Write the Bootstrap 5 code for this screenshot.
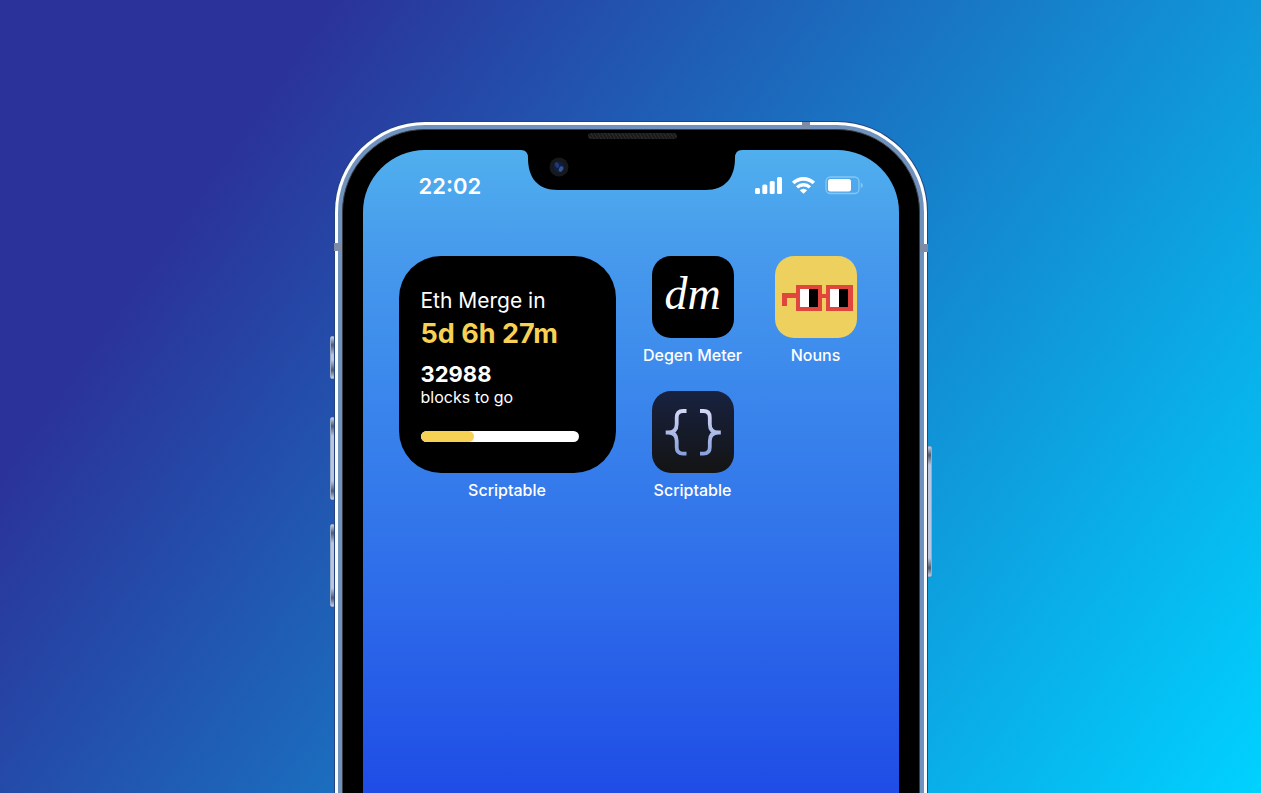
<!DOCTYPE html>
<html lang="en">
<head>
<meta charset="utf-8">
<meta name="viewport" content="width=device-width, initial-scale=1">
<title>Eth Merge widget</title>
<link rel="stylesheet" href="https://cdn.jsdelivr.net/npm/bootstrap@5.3.0/dist/css/bootstrap.min.css">
<style>
  body {
    font-family: Inter, "Liberation Sans", sans-serif;
    background: linear-gradient(125deg, #2b3299 18%, #00d2ff 100%) no-repeat;
  }
  .stage { height: 100vh; padding-top: 121px; }
  .phone { width: 594px; height: 1200px; }
  .rim {
    height: 100%;
    border-radius: 91px;
    padding: 1px;
    background: #26437f;
  }
  .rim-light { height: 100%; border-radius: 90px; padding: 3px; background: linear-gradient(#fff, #f4f6fb); }
  .rim-blue { height: 100%; border-radius: 87px; padding: 4px; background: #6f91be; }
  .bezel { height: 100%; border-radius: 83px; border: 1px solid #3a3c42; padding: 20px; background: #000; }
  .screen {
    height: 100%;
    border-radius: 62px;
    background: linear-gradient(#50afee 0, #4699ec 110px, #3a86ec 250px, #2e6cea 440px, #1f4de6 640px);
  }
  .notch { top: 28px; left: 183px; width: 230px; }
  .speaker {
    top: 12px; left: 254px; width: 89px; height: 6px; border-radius: 3px;
    background: repeating-linear-gradient(60deg, #1b1b1b 0 2px, #2a2a2a 2px 3px);
  }
  .camera { top: 36px; left: 215px; }
  .side-key {
    width: 5px; border-radius: 2px;
    background: linear-gradient(#c5d0e2 0, #4d5a70 8px, #b8c6df 18px, #b8c6df calc(100% - 18px), #4d5a70 calc(100% - 8px), #c5d0e2 100%);
    border: 1px solid #9aabc8;
  }
  .key-mute { left: -4px; top: 215px; height: 43px; }
  .key-up { left: -4px; top: 296px; height: 83px; }
  .key-down { left: -4px; top: 403px; height: 83px; }
  .key-power { right: -4px; top: 325px; height: 131px; }
  .band { background: #7e8ba6; width: 8px; height: 8px; }
  .band-l { left: 0; top: 122px; }
  .band-r { right: 0; top: 123px; }
  .band-t { right: 118px; top: 1px; height: 7px; }
  .status { height: 72px; padding: 0 36px 0 56px; color: #fff; }
  .clock { font-size: 22px; font-weight: 600; line-height: 28px; }
  .home { padding: 34px 36px 0; column-gap: 36px; }
  .apps { display: grid; grid-template-columns: 82px 82px; column-gap: 41px; row-gap: 25px; }
  .caption, .caption:hover { color: #fff; font-size: 16px; font-weight: 500; line-height: 22px; text-decoration: none; }
  .caption { margin-top: 6px; white-space: nowrap; }
  .widget { width: 217px; height: 217px; border-radius: 42px; background: #000; color: #fff; padding: 31px 22px; }
  .w-title { font-size: 21px; line-height: 28px; }
  .w-time { font-size: 27px; line-height: 38px; font-weight: 700; color: #f7d154; }
  .w-count { font-size: 22px; line-height: 26px; font-weight: 700; margin-top: 8px; }
  .w-note { font-size: 16px; line-height: 20px; }
  .w-bar { width: 158px; height: 11px; border-radius: 6px; background: #fff; margin-top: 24px; }
  .w-bar .progress-bar { background: #f7d154; border-radius: 6px; }
  .app-icon { width: 82px; height: 82px; border-radius: 19px; }
  .icon-dm { background: #000; color: #fff; font: italic 46px/76px "Liberation Serif", serif; }
  .icon-nouns { background: #edd05d; }
  .icon-code { background: linear-gradient(#182240, #141414); }
</style>
<script src="https://cdn.jsdelivr.net/npm/bootstrap@5.3.0/dist/js/bootstrap.bundle.min.js"></script>
</head>
<body>
<main class="stage overflow-hidden">
  <div class="phone mx-auto position-relative">
    <span class="side-key key-mute position-absolute"></span>
    <span class="side-key key-up position-absolute"></span>
    <span class="side-key key-down position-absolute"></span>
    <span class="side-key key-power position-absolute"></span>
    <div class="rim position-relative"><div class="rim-light"><div class="rim-blue"><div class="bezel">
      <div class="screen">
        <header class="status d-flex align-items-center justify-content-between">
          <time class="clock">22:02</time>
          <svg width="108" height="20" viewBox="0 0 108 20" fill="#fff" aria-hidden="true">
            <rect x="0" y="12" width="5" height="6" rx="1.5"/>
            <rect x="7.3" y="8.5" width="5" height="9.500" rx="1.5"/>
            <rect x="14.7" y="5" width="5" height="13" rx="1.5"/>
            <rect x="22" y="1" width="5" height="17" rx="1.5"/>
            <path d="M38.200 7a14.800 14.800 0 0 1 20.600 0" fill="none" stroke="#fff" stroke-width="3.600"/>
            <path d="M42.100 11.400a9.200 9.200 0 0 1 12.800 0" fill="none" stroke="#fff" stroke-width="3.400"/>
            <path d="M48.500 17.800l-3.700-3.600a5.300 5.300 0 0 1 7.400 0z"/>
            <rect x="71" y="1" width="33" height="16.500" rx="4.500" fill="none" stroke="#84c8f4" stroke-width="1.300"/>
            <rect x="73" y="3" width="23" height="12.500" rx="2.500"/>
            <path d="M105.800 6.800q2 .8 2 2.600t-2 2.600z" fill="#84c8f4"/>
          </svg>
        </header>
        <div class="home d-flex align-items-start">
          <section class="d-flex flex-column align-items-center">
            <div class="widget">
              <div class="w-title">Eth Merge in</div>
              <div class="w-time">5d 6h 27m</div>
              <div class="w-count">32988</div>
              <div class="w-note">blocks to go</div>
              <div class="w-bar progress" role="progressbar" aria-label="Merge progress" aria-valuenow="34" aria-valuemin="0" aria-valuemax="100">
                <div class="progress-bar" style="width: 34%"></div>
              </div>
            </div>
            <div class="caption">Scriptable</div>
          </section>
          <nav class="apps" aria-label="Apps">
            <a href="#" class="caption mt-0 d-flex flex-column align-items-center">
              <span class="app-icon icon-dm text-center">dm</span>
              <span class="caption">Degen Meter</span>
            </a>
            <a href="#" class="caption mt-0 d-flex flex-column align-items-center">
              <svg class="app-icon icon-nouns" viewBox="0 0 82 82" aria-hidden="true">
                <path d="M7 37h14v-8h26v9h4v-9h27v26H51V42h-4v13H21V42h-9v8H7z" fill="#e0463d"/>
                <path d="M25 33h9v18h-9zM55 33h9v18h-9z" fill="#fff"/>
                <path d="M34 33h9v18h-9zM64 33h9v18h-9z" fill="#000"/>
              </svg>
              <span class="caption">Nouns</span>
            </a>
            <a href="#" class="caption mt-0 d-flex flex-column align-items-center">
              <svg class="app-icon icon-code" viewBox="0 0 82 82" aria-hidden="true">
                <defs><linearGradient id="brace" x1="0" y1="18" x2="0" y2="64" gradientUnits="userSpaceOnUse"><stop stop-color="#d5d8f5"/><stop offset="1" stop-color="#88a0dc"/></linearGradient></defs>
                <g fill="none" stroke="url(#brace)" stroke-width="3.800">
                  <path d="M34.500 20H31q-6.300 0-6.300 6.500V33q0 8.500-8.500 8.500h-2.500h2.500q8.500 0 8.500 8.500v6.300q0 6.300 6.300 6.300h3.500"/>
                  <path d="M48 20h3.500q6.300 0 6.300 6.500V33q0 8.500 8.500 8.500h2.500h-2.500q-8.500 0-8.500 8.500v6.300q0 6.300-6.300 6.300H48"/>
                </g>
              </svg>
              <span class="caption">Scriptable</span>
            </a>
          </nav>
        </div>
      </div>
    </div></div></div></div>
    <svg class="notch position-absolute" height="42" viewBox="0 0 230 42" aria-hidden="true">
      <path d="M0 0V1H4Q11 1 11 9C11 28 20 41 41 41H188C209 41 218 28 218 9Q218 1 225 1H230V0z"/>
    </svg>
    <span class="speaker position-absolute"></span>
    <svg class="camera position-absolute" width="20" height="20" viewBox="0 0 20 20" aria-hidden="true">
      <circle cx="10" cy="10" r="9.500" fill="#17181a"/>
      <circle cx="10" cy="10" r="5.500" fill="#0f1d45"/>
      <ellipse cx="8" cy="8" rx="2" ry="3" fill="#23386f" transform="rotate(-30 8 8)"/>
      <ellipse cx="12" cy="12" rx="2" ry="3" fill="#335690" transform="rotate(30 12 12)"/>
    </svg>
    <span class="band band-l position-absolute"></span>
    <span class="band band-r position-absolute"></span>
    <span class="band band-t position-absolute"></span>
  </div>
</main>
</body>
</html>
